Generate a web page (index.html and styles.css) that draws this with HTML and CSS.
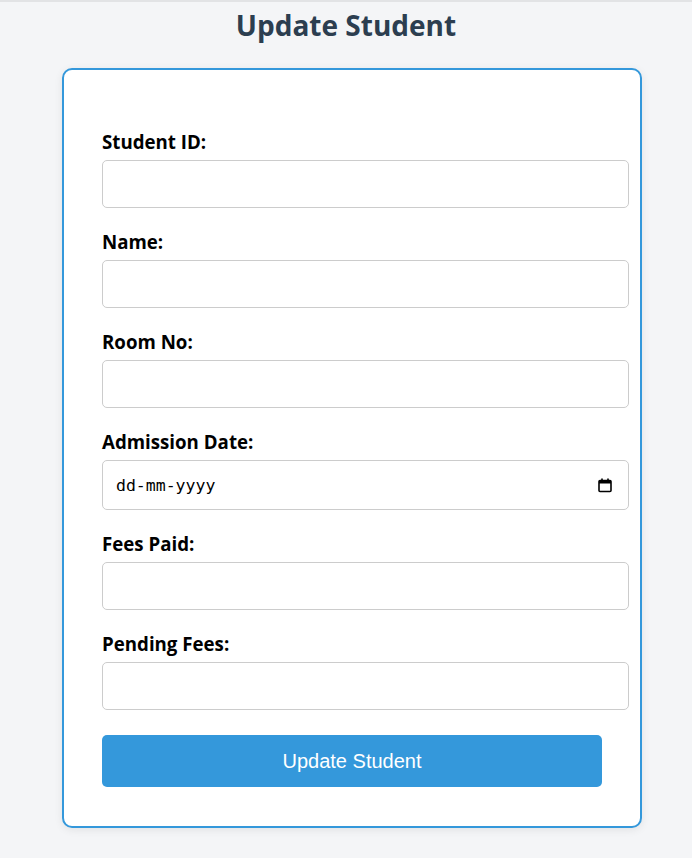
FILE: index.html
```html
<!DOCTYPE html>
<html lang="en">
<head>
<meta charset="utf-8">
<title>Update Student</title>
<link rel="stylesheet" href="styles.css">
</head>
<body>
<div class="page">
  <h1 class="title">Update Student</h1>
  <form class="card">
    <div class="group">
      <label class="label" for="sid">Student ID:</label>
      <input class="input" id="sid" type="text">
    </div>
    <div class="group">
      <label class="label" for="name">Name:</label>
      <input class="input" id="name" type="text">
    </div>
    <div class="group">
      <label class="label" for="room">Room No:</label>
      <input class="input" id="room" type="text">
    </div>
    <div class="group">
      <label class="label" for="adm">Admission Date:</label>
      <div class="input date" id="adm">
        <span class="date-text">dd-mm-yyyy</span>
        <svg class="cal" width="16" height="16" viewBox="0 0 16 16" aria-hidden="true">
          <rect x="2" y="3.5" width="12" height="11" rx="1" fill="none" stroke="#000" stroke-width="1.6"/>
          <rect x="2" y="3.5" width="12" height="3" fill="#000"/>
          <rect x="4.2" y="1.5" width="1.6" height="3" fill="#000"/>
          <rect x="10.2" y="1.5" width="1.6" height="3" fill="#000"/>
        </svg>
      </div>
    </div>
    <div class="group">
      <label class="label" for="fees">Fees Paid:</label>
      <input class="input" id="fees" type="text">
    </div>
    <div class="group">
      <label class="label" for="pending">Pending Fees:</label>
      <input class="input" id="pending" type="text">
    </div>
    <button class="btn" type="button">Update Student</button>
  </form>
</div>
</body>
</html>
```
FILE: styles.css
```css
html, body {
  margin: 0;
  padding: 0;
}
body {
  background: #f4f5f7;
  font-family: "Open Sans", "Noto Sans", sans-serif;
  border-top: 2px solid #e2e3e5;
  min-height: 856px;
}
.page {
  display: flex;
  flex-direction: column;
  align-items: flex-start;
}
.title {
  align-self: stretch;
  margin: 4px 0 24px 0;
  text-align: center;
  font-size: 28px;
  line-height: 38px;
  font-weight: 700;
  color: #2c3e50;
}
.card {
  margin-left: 62px;
  width: 500px;
  padding: 38px 38px 39px 38px;
  background: #fff;
  border: 2px solid #3498db;
  border-radius: 10px;
  box-shadow: 0 2px 8px rgba(0, 0, 0, 0.08);
  display: flex;
  flex-direction: column;
}
.group {
  display: flex;
  flex-direction: column;
  padding-top: 23px;
}
.label {
  font-size: 18.7px;
  line-height: 22px;
  font-weight: 700;
  color: #000;
  margin-bottom: 7px;
}
.input {
  width: 100%;
  box-sizing: content-box;
  height: 22px;
  padding: 12px 13px 12px 12px;
  border: 1px solid #ccc;
  border-radius: 5px;
  font-size: 16px;
  background: #fff;
  margin: 0;
}
.date {
  height: 24px;
  display: flex;
  align-items: center;
  justify-content: space-between;
  padding: 12px 13px 12px 13px;
  width: calc(100% - 1px);
}
.date-text {
  font-family: "DejaVu Sans Mono", monospace;
  font-size: 16.5px;
  color: #000;
}
.cal {
  display: block;
  margin-right: 2px;
}
.btn {
  margin-top: 25px;
  width: 500px;
  height: 52px;
  background: #3498db;
  color: #fff;
  border: none;
  border-radius: 5px;
  font-family: "Liberation Sans", Arial, sans-serif;
  font-size: 20px;
  padding: 0;
}
```
